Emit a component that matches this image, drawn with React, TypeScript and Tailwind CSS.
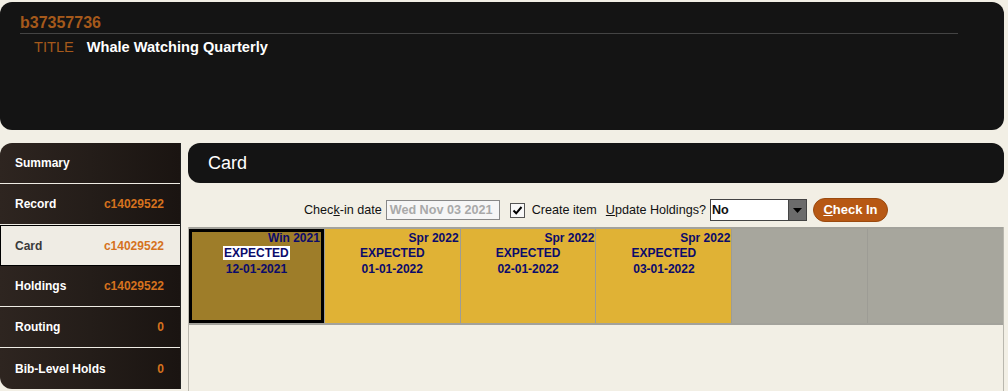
import React from 'react';

type NavItem = { label: string; value?: string; active?: boolean };

const navItems: NavItem[] = [
  { label: 'Summary' },
  { label: 'Record', value: 'c14029522' },
  { label: 'Card', value: 'c14029522', active: true },
  { label: 'Holdings', value: 'c14029522' },
  { label: 'Routing', value: '0' },
  { label: 'Bib-Level Holds', value: '0' },
];

type Box = { season?: string; status?: string; date?: string; kind: 'selected' | 'expected' | 'empty' };

const boxes: Box[] = [
  { season: 'Win 2021', status: 'EXPECTED', date: '12-01-2021', kind: 'selected' },
  { season: 'Spr 2022', status: 'EXPECTED', date: '01-01-2022', kind: 'expected' },
  { season: 'Spr 2022', status: 'EXPECTED', date: '02-01-2022', kind: 'expected' },
  { season: 'Spr 2022', status: 'EXPECTED', date: '03-01-2022', kind: 'expected' },
  { kind: 'empty' },
  { kind: 'empty' },
];

const Sidebar: React.FC = () => (
  <div className="w-[181px] shrink-0 border-r border-[#222] self-start">
    <ul className="flex flex-col">
      {navItems.map((item, i) => {
        const first = i === 0;
        const last = i === navItems.length - 1;
        return (
          <li
            key={item.label}
            className={`h-[41px] flex items-center justify-between pr-[16px] text-[12px] font-bold ${
              item.active
                ? 'bg-[#efece4] text-[#3a3a3a] border border-black border-r-0 pl-[14px]'
                : 'bg-gradient-to-r from-[#2e2520] via-[#241d19] to-[#1a1411] text-white pl-[15px]'
            } ${first ? 'rounded-tl-[12px]' : ''} ${last ? 'rounded-bl-[12px]' : ''} ${
              !last && !item.active ? 'border-b border-[#efece4]' : ''
            }`}
          >
            <span>{item.label}</span>
            {item.value && <span className="text-[#d5721e]">{item.value}</span>}
          </li>
        );
      })}
    </ul>
  </div>
);

const CheckBox: React.FC = () => (
  <span className="w-[15px] h-[15px] border border-[#555] bg-[#f8f8f8] flex items-center justify-center">
    <svg width="11" height="11" viewBox="0 0 11 11">
      <path d="M1.5 5.5 L4.2 8.3 L9.5 2" stroke="#000" strokeWidth="2" fill="none" />
    </svg>
  </span>
);

const Toolbar: React.FC = () => (
  <div className="flex items-center justify-center h-[24px] mt-[15px] text-[12.6px] text-[#111]">
    <span className="mr-[4px]">
      Chec<span className="underline">k</span>-in date
    </span>
    <div className="w-[114px] h-[20px] border border-[#888] bg-[#f6f6f6] flex items-center px-[3px] text-[#a9a9a9] font-semibold">
      Wed Nov 03 2021
    </div>
    <span className="ml-[10px] mr-[7px]">
      <CheckBox />
    </span>
    <span>Create item</span>
    <span className="ml-[9px] mr-[4px]">
      <span className="underline">U</span>pdate Holdings?
    </span>
    <div className="w-[97px] h-[22px] border border-[#444] bg-white flex items-stretch">
      <span className="flex-1 flex items-center pl-[1px] font-semibold">No</span>
      <span className="w-[18px] bg-[#6b6b6b] flex items-center justify-center border-l border-[#444]">
        <svg width="9" height="5" viewBox="0 0 9 5">
          <path d="M0 0 L9 0 L4.5 5 Z" fill="#000" />
        </svg>
      </span>
    </div>
    <button className="ml-[6px] w-[75px] h-[24px] rounded-full bg-[#b75814] border border-[#9a4a10] text-white font-bold text-[13px]">
      <span className="underline">C</span>heck In
    </button>
  </div>
);

const BoxCell: React.FC<{ box: Box }> = ({ box }) => {
  if (box.kind === 'empty') return <div className="bg-[#a7a69d]" />;
  const selected = box.kind === 'selected';
  return (
    <div
      className={`flex flex-col text-[12px] font-bold text-[#0b0b6b] leading-[14px] ${
        selected ? 'bg-[#9e7d29] border-[3px] border-black' : 'bg-[#e0b235] pt-[3px]'
      }`}
    >
      <div className="text-right pr-[1px] -mt-[1px]">{box.season}</div>
      <div className="flex flex-col items-center mt-[1px] gap-[2px]">
        <span className={selected ? 'bg-white px-[1px]' : ''}>{box.status}</span>
        <span>{box.date}</span>
      </div>
    </div>
  );
};

export default function App() {
  return (
    <div className="min-h-[391px] bg-[#f2efe5] font-['Liberation_Sans',Arial,sans-serif] pt-[2px] pr-[4px] overflow-hidden">
      <div className="h-[128px] rounded-[12px] bg-[#141414] pt-[11px]">
        <div className="ml-[20px] mr-[46px] border-b border-[#444] pb-[1px] text-[16px] font-bold text-[#a5591b] leading-[19px]">
          b37357736
        </div>
        <div className="flex items-center gap-[13px] ml-[34px] mt-[5px] text-[14.6px] leading-[17px]">
          <span className="text-[#a5591b]">TITLE</span>
          <span className="font-bold text-white">Whale Watching Quarterly</span>
        </div>
      </div>

      <div className="flex mt-[13px]">
        <Sidebar />
        <div className="flex-1 ml-[7px] flex flex-col">
          <div className="h-[40px] rounded-[12px] bg-[#141414] flex items-center pl-[20px] text-[18px] text-white">
            Card
          </div>
          <Toolbar />
          <div className="mt-[5px] border-l border-r border-[#b9b7ae] min-h-[170px]">
            <div className="grid grid-cols-6 gap-px bg-[#9d9c95] border-t-2 border-b-2 border-[#a3a29b] h-[98px]">
              {boxes.map((b, i) => (
                <BoxCell key={i} box={b} />
              ))}
            </div>
          </div>
        </div>
      </div>
    </div>
  );
}
